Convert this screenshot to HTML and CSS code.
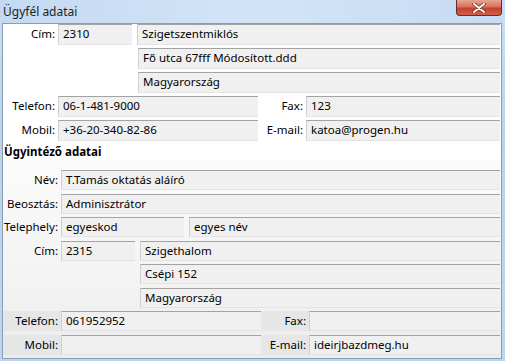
FILE: index.html
```html
<!DOCTYPE html>
<html lang="hu">
<head>
    <meta charset="UTF-8">
    <title>Ügyfél adatai</title>
    <link rel="stylesheet" href="styles.css">
</head>
<body>
    <div class="window">
        <div class="titlebar">
            <span class="title">Ügyfél adatai</span>
            <div class="close-btn">
                <svg width="14" height="10" viewBox="0 0 14 10">
                    <path d="M2 1 L12 9 M12 1 L2 9" stroke="#6b2a20" stroke-width="3.4" stroke-linecap="round"/>
                    <path d="M2 1 L12 9 M12 1 L2 9" stroke="#ffffff" stroke-width="2" stroke-linecap="round"/>
                </svg>
            </div>
        </div>

        <div class="content">
            <div class="client">
                <div class="row">
                    <div class="label l1">Cím:</div>
                    <div class="field zip1">2310</div>
                    <div class="field grow">Szigetszentmiklós</div>
                </div>
                <div class="row addr1">
                    <div class="field grow">Fő utca 67fff Módosított.ddd</div>
                </div>
                <div class="row addr1">
                    <div class="field grow">Magyarország</div>
                </div>
                <div class="row">
                    <div class="label l1">Telefon:</div>
                    <div class="field half1">06-1-481-9000</div>
                    <div class="label l2">Fax:</div>
                    <div class="field grow">123</div>
                </div>
                <div class="row">
                    <div class="label l1">Mobil:</div>
                    <div class="field half1">+36-20-340-82-86</div>
                    <div class="label l2">E-mail:</div>
                    <div class="field grow">katoa@progen.hu</div>
                </div>
                <div class="heading">Ügyintéző adatai</div>
            </div>

            <div class="agent">
                <div class="row">
                    <div class="label l3">Név:</div>
                    <div class="field grow">T.Tamás oktatás aláíró</div>
                </div>
                <div class="row">
                    <div class="label l3">Beosztás:</div>
                    <div class="field grow">Adminisztrátor</div>
                </div>
                <div class="row">
                    <div class="label l3">Telephely:</div>
                    <div class="field site">egyeskod</div>
                    <div class="field grow">egyes név</div>
                </div>
                <div class="row">
                    <div class="label l3">Cím:</div>
                    <div class="field zip2">2315</div>
                    <div class="field grow">Szigethalom</div>
                </div>
                <div class="row addr2">
                    <div class="field grow">Csépi 152</div>
                </div>
                <div class="row addr2">
                    <div class="field grow">Magyarország</div>
                </div>
                <div class="row">
                    <div class="label l3 shade">Telefon:</div>
                    <div class="field half2">061952952</div>
                    <div class="label l2 shade">Fax:</div>
                    <div class="field grow"></div>
                </div>
                <div class="row">
                    <div class="label l3 shade">Mobil:</div>
                    <div class="field half2"></div>
                    <div class="label l2 shade">E-mail:</div>
                    <div class="field grow">ideirjbazdmeg.hu</div>
                </div>
            </div>
        </div>
    </div>
</body>
</html>
```

FILE: styles.css
```css
body {
    margin: 0;
    font-family: "Noto Sans", "Open Sans", sans-serif;
    font-size: 11.5px;
    color: #000000;
}
.window {
    width: 505px;
    height: 361px;
    box-sizing: border-box;
    background: linear-gradient(180deg, #c9def5 0%, #b9d3ef 40%, #bed6f1 100%);
    padding: 0 3px 4px 2px;
    display: flex;
    flex-direction: column;
}
.titlebar {
    height: 24px;
    display: flex;
    justify-content: space-between;
    align-items: flex-start;
    background: linear-gradient(90deg, #c3daf3 0%, #d2e4f7 50%, #c6dcf4 100%);
    margin: 0 -3px 0 -2px;
    padding: 0 3px 0 3px;
}
.title {
    line-height: 23px;
    font-size: 12px;
    color: #1e1e1e;
}
.close-btn {
    width: 44px;
    height: 15px;
    border: 1px solid #6b2b24;
    border-top: none;
    border-radius: 0 0 4px 4px;
    background: linear-gradient(180deg, #e8a593 0%, #d7725e 45%, #c4422a 55%, #d0604a 100%);
    display: flex;
    justify-content: center;
    align-items: center;
}
.content {
    flex: 1;
    border: 1px solid #8c9cb1;
    background: #ffffff;
    display: flex;
    flex-direction: column;
}
.client {
    background: #ffffff;
}
.agent {
    flex: 1;
    background: linear-gradient(180deg, #fbfbfb 0%, #f3f3f3 60%, #ececec 100%);
    padding-top: 10px;
}
.row {
    display: flex;
    height: 21px;
    margin-bottom: 3px;
    margin-right: 1px;
}
.agent .row {
    height: 20px;
    margin-bottom: 3.5px;
}
.addr1 {
    padding-left: 135px;
}
.addr2 {
    padding-left: 137px;
}
.label {
    text-align: right;
    line-height: 20px;
    padding-right: 3px;
    box-sizing: border-box;
}
.l1 { width: 55px; }
.l2 { width: 48px; }
.l3 { width: 58px; }
.shade {
    background: #e6e6e6;
}
.field {
    box-sizing: border-box;
    background: #f0f0f0;
    border-top: 1px solid #a3a3a3;
    border-left: 1px solid #d0d0d0;
    border-bottom: 1px solid #e4e4e4;
    padding-left: 4px;
    line-height: 18px;
    white-space: nowrap;
    overflow: hidden;
}
.grow { flex: 1; }
.zip1 { width: 74px; margin-right: 5px; }
.half1 { width: 200px; }
.zip2 { width: 74px; margin-right: 5px; }
.site { width: 123px; margin-right: 5px; }
.half2 { width: 200px; }
.heading {
    font-weight: bold;
    padding-left: 1px;
    line-height: 16px;
    margin-top: 2px;
}
```
